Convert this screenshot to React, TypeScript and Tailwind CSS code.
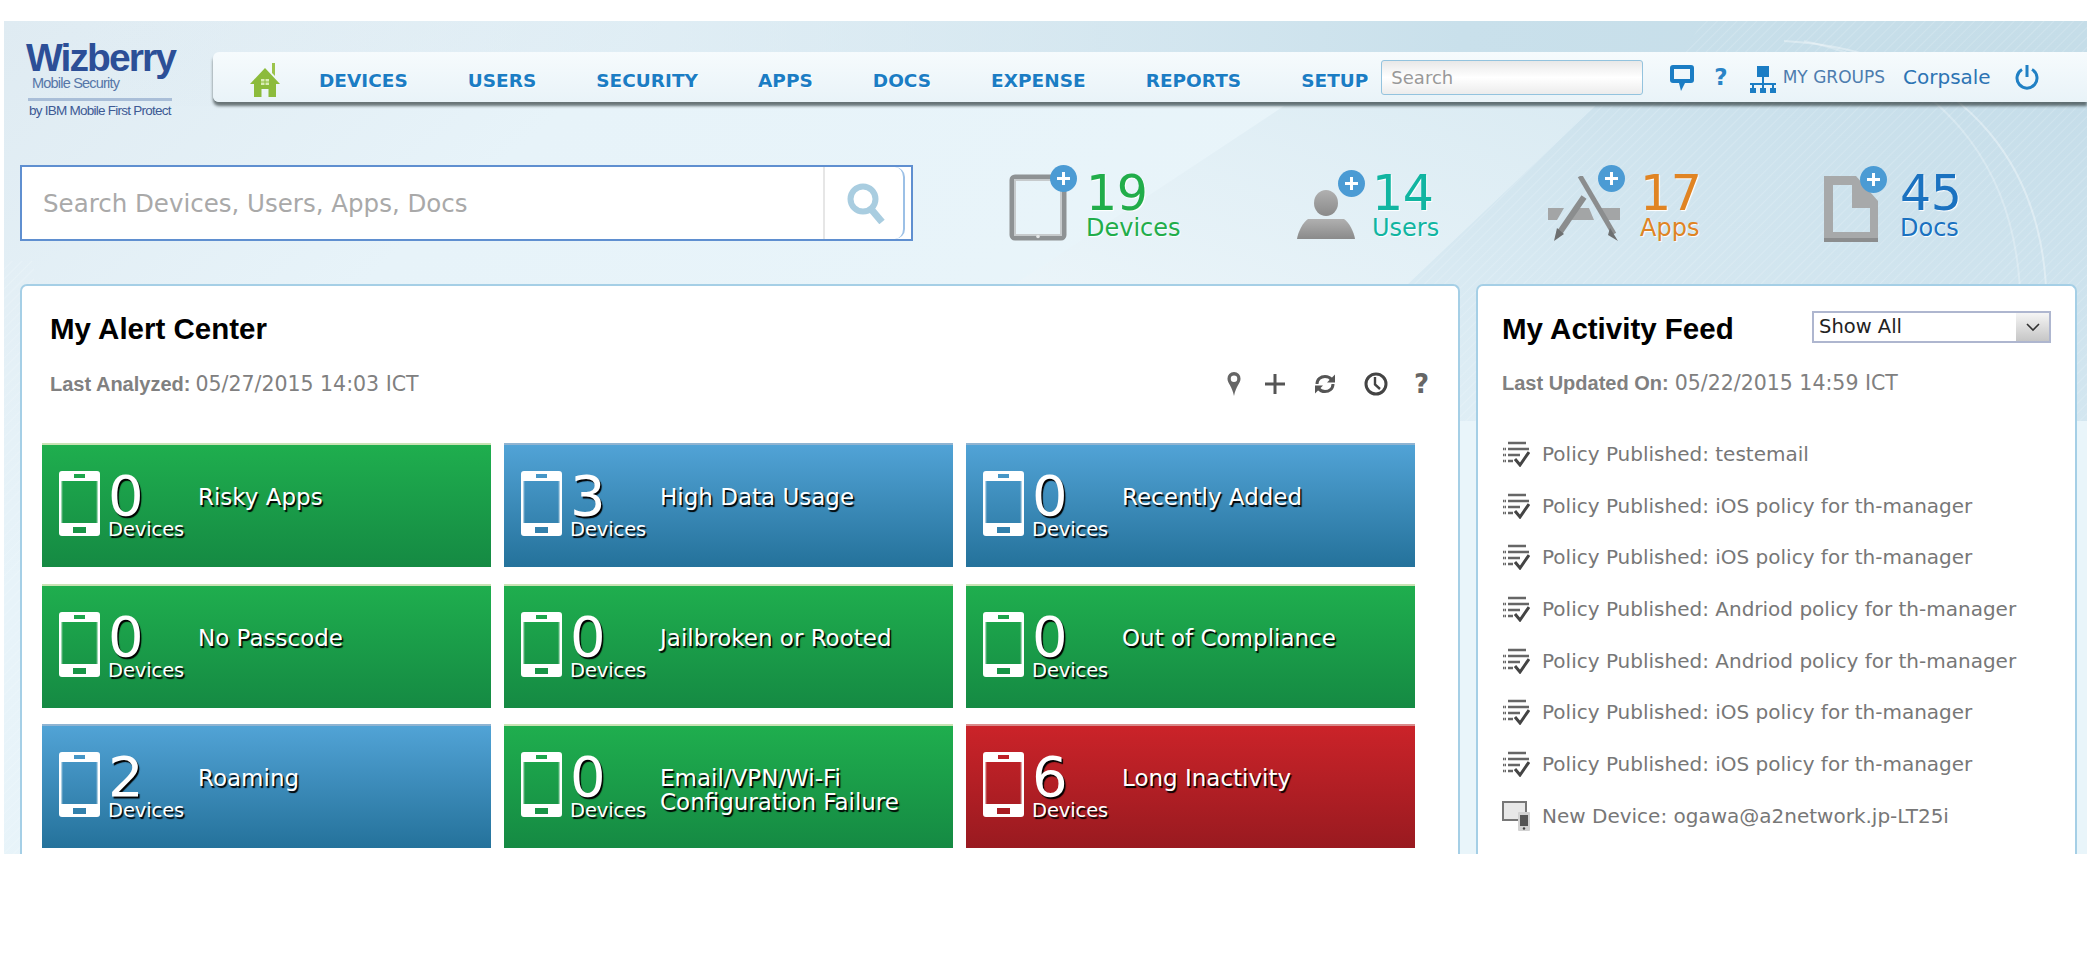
const BODY = "font-['DejaVu_Sans',sans-serif]";
const ARIAL = "font-['Liberation_Sans',Arial,sans-serif]";

type Tone = "green" | "blue" | "red";

const TONE: Record<Tone, string> = {
  green: "border-t-[#c9e3b4] bg-gradient-to-b from-[#1fae4e] to-[#158a43]",
  blue: "border-t-[#8fb4d2] bg-gradient-to-b from-[#51a3d6] to-[#24729b]",
  red: "border-t-[#d98a8a] bg-gradient-to-b from-[#cb2329] to-[#991a20]",
};

const TILES: { count: number; label: string[]; tone: Tone }[] = [
  { count: 0, label: ["Risky Apps"], tone: "green" },
  { count: 3, label: ["High Data Usage"], tone: "blue" },
  { count: 0, label: ["Recently Added"], tone: "blue" },
  { count: 0, label: ["No Passcode"], tone: "green" },
  { count: 0, label: ["Jailbroken or Rooted"], tone: "green" },
  { count: 0, label: ["Out of Compliance"], tone: "green" },
  { count: 2, label: ["Roaming"], tone: "blue" },
  { count: 0, label: ["Email/VPN/Wi-Fi", "Configuration Failure"], tone: "green" },
  { count: 6, label: ["Long Inactivity"], tone: "red" },
];

const FEED = [
  "Policy Published: testemail",
  "Policy Published: iOS policy for th-manager",
  "Policy Published: iOS policy for th-manager",
  "Policy Published: Andriod policy for th-manager",
  "Policy Published: Andriod policy for th-manager",
  "Policy Published: iOS policy for th-manager",
  "Policy Published: iOS policy for th-manager",
];

const NAV = ["DEVICES", "USERS", "SECURITY", "APPS", "DOCS", "EXPENSE", "REPORTS", "SETUP"];

function Backdrop() {
  return (
    <svg className="absolute inset-0 h-full w-full" viewBox="0 0 2083 833" preserveAspectRatio="none">
      <defs>
        <linearGradient id="base" x1="0" y1="0" x2="0.75" y2="0.35">
          <stop offset="0" stopColor="#dfebf2" />
          <stop offset="0.35" stopColor="#e7f3f9" />
          <stop offset="1" stopColor="#e9f5fa" />
        </linearGradient>
        <linearGradient id="band" x1="0" y1="1" x2="1" y2="0">
          <stop offset="0" stopColor="#f4fafd" />
          <stop offset="1" stopColor="#d9eaf2" />
        </linearGradient>
        <linearGradient id="right" x1="0" y1="1" x2="1" y2="0">
          <stop offset="0" stopColor="#e2f0f7" />
          <stop offset="1" stopColor="#c5dde9" />
        </linearGradient>
        <linearGradient id="top" x1="0" y1="0" x2="1" y2="0">
          <stop offset="0" stopColor="#e0ebf2" stopOpacity="0" />
          <stop offset="0.7" stopColor="#c9e0eb" />
          <stop offset="1" stopColor="#c5dde8" />
        </linearGradient>
        <pattern id="hatch" width="7" height="7" patternUnits="userSpaceOnUse" patternTransform="rotate(-45)">
          <line x1="0" y1="0" x2="7" y2="0" stroke="#ffffff" strokeOpacity="0.22" strokeWidth="1.5" />
        </pattern>
      </defs>
      <rect width="2083" height="833" fill="url(#base)" />
      <rect width="2083" height="85" fill="url(#top)" />
      <polygon points="1591,85 1280,85 804,400 1260,400" fill="url(#band)" opacity="0.9" />
      <polygon points="1591,85 2083,85 2083,400 1260,400" fill="url(#right)" />
      <polygon points="1591,85 2083,85 2083,400 1260,400" fill="url(#hatch)" />
      <polygon points="1700,0 2083,0 2083,85 1640,85" fill="url(#hatch)" />
      <path d="M1780 20 C1960 30 2060 150 2040 330" fill="none" stroke="#ffffff" strokeOpacity="0.35" strokeWidth="2" />
      <path d="M1800 20 C1940 50 2030 150 2015 330" fill="none" stroke="#ffffff" strokeOpacity="0.25" strokeWidth="2" />
      <rect y="240" width="30" height="593" fill="url(#hatch)" />
    </svg>
  );
}

function Logo() {
  return (
    <div className={`${ARIAL} ml-[22px] mt-[20px] w-[152px] shrink-0`}>
      <div className="h-[34px] text-[39px] leading-[34px] font-bold tracking-[-1.9px] text-[#2c4f97]">Wizberry</div>
      <div className="ml-[6px] mt-[1px] text-[14.5px] leading-[14px] tracking-[-0.8px] text-[#5676a8]">Mobile Security</div>
      <div className="ml-[2px] mt-[8px] h-[3px] w-[144px] bg-[#a9bed8]" />
      <div className="ml-[3px] mt-[2px] whitespace-nowrap text-[13.5px] leading-[15px] tracking-[-0.75px] text-[#3d5a94]">by IBM Mobile First Protect</div>
    </div>
  );
}

function HomeIcon() {
  return (
    <svg width="30" height="34" viewBox="0 0 30 34" className="mt-[5px] shrink-0">
      <path d="M15 5 L30 21 L26 21 L26 34 L18.5 34 L18.5 26 L11.5 26 L11.5 34 L4 34 L4 21 L0 21 Z" fill="#8cbb3c" />
      <path d="M22 0 L25 0 L25 13 L22 10 Z" fill="#9cc44c" />
      <rect x="11" y="16" width="8" height="6" fill="#d9ecb5" />
      <path d="M15 16 V22 M11 19 H19" stroke="#8cbb3c" strokeWidth="1" />
    </svg>
  );
}

function AddBadge({ className }: { className: string }) {
  return (
    <svg width="27" height="27" viewBox="0 0 27 27" className={`absolute ${className}`}>
      <circle cx="13.5" cy="13.5" r="13.5" fill="#4b9bd4" />
      <path d="M13.5 7 V20 M7 13.5 H20" stroke="#ffffff" strokeWidth="3" />
    </svg>
  );
}

function TabletIcon() {
  return (
    <svg width="58" height="67" viewBox="0 0 58 67" className="absolute left-0 top-[9px]">
      <rect x="3" y="3" width="52" height="61" rx="3" fill="none" stroke="#8e9294" strokeWidth="5" />
      <rect x="6" y="6" width="46" height="55" fill="none" stroke="#c6cacc" strokeWidth="2" />
      <circle cx="29" cy="62.5" r="1.8" fill="#e4e7e8" />
    </svg>
  );
}

function UserIcon() {
  return (
    <svg width="58" height="50" viewBox="0 0 58 50" className="absolute left-0 top-[25px]">
      <defs>
        <linearGradient id="userFill" x1="0" y1="0" x2="0" y2="1">
          <stop offset="0" stopColor="#b0b0b0" />
          <stop offset="1" stopColor="#8a8a8a" />
        </linearGradient>
      </defs>
      <ellipse cx="29" cy="13" rx="12" ry="13" fill="url(#userFill)" />
      <path d="M11 29 H47 C52 32 57 42 58 49 H0 C1 42 6 32 11 29 Z" fill="url(#userFill)" />
    </svg>
  );
}

function AppsIcon() {
  return (
    <svg width="72" height="66" viewBox="0 0 72 66" className="absolute left-0 top-[11px]">
      <path d="M0 32 H16 L9 44 H0 Z M27 32 H41 L46 44 H22 Z M52 32 H72 V44 H58 Z" fill="#a3a5a6" />
      <path d="M32 0 L66 58" stroke="#8b8d8e" strokeWidth="5" />
      <path d="M62 52 L70 65 L60 59 Z" fill="#6d6f70" />
      <path d="M36 21 L12 56" stroke="#8b8d8e" strokeWidth="6" />
      <path d="M9 52 L6 65 L16 58 Z" fill="#6d6f70" />
    </svg>
  );
}

function DocIcon() {
  return (
    <svg width="54" height="66" viewBox="0 0 54 66" className="absolute left-0 top-[11px]">
      <path d="M0 0 H32 L54 25 V66 H0 Z M9 9 V56 H46 V32 H28 V9 Z" fill="#a7a9aa" fillRule="evenodd" />
      <path d="M0 62 H54 V66 H0 Z" fill="#8b8d8e" />
    </svg>
  );
}

function Stat(props: { icon: React.ReactNode; badge: string; value: number; label: string; color: string; width: string; inset: string }) {
  return (
    <div className={`relative h-[76px] shrink-0 ${props.width}`}>
      {props.icon}
      <AddBadge className={props.badge} />
      <div className={`${props.inset} ${props.color} [text-shadow:1px_1px_1px_#fff]`}>
        <div className="h-[44px] text-[49px] leading-[44px] tracking-[-0.5px]">{props.value}</div>
        <div className="text-[24px] leading-[24px]">{props.label}</div>
      </div>
    </div>
  );
}

function PhoneGlyph() {
  return (
    <svg width="41" height="65" viewBox="0 0 41 65" className="shrink-0">
      <path
        fillRule="evenodd"
        fill="#ffffff"
        d="M3 0 H38 Q41 0 41 3 V62 Q41 65 38 65 H3 Q0 65 0 62 V3 Q0 0 3 0 Z M2.5 10 V52 H38.5 V10 Z M15 3 V7 H26 V3 Z M14 56 V62 H27 V56 Z"
      />
      <rect x="2.5" y="10" width="1" height="42" fill="#ffffff" fillOpacity="0.35" />
      <rect x="37.5" y="10" width="1" height="42" fill="#ffffff" fillOpacity="0.35" />
    </svg>
  );
}

function AlertTile({ count, label, tone }: { count: number; label: string[]; tone: Tone }) {
  return (
    <div className={`flex h-[124px] items-start border-t-2 pl-[17px] text-white [text-shadow:1.5px_1.5px_1px_#000] ${TONE[tone]}`}>
      <div className="mt-[26px]">
        <PhoneGlyph />
      </div>
      <div className="ml-[8px] mt-[27px] w-[90px] shrink-0">
        <div className="h-[47px] text-[56px] leading-[47px] tracking-[-1px]">{count}</div>
        <div className="text-[19.5px] leading-[22px] tracking-[-0.1px]">Devices</div>
      </div>
      <div className="mt-[40px] text-[23px] leading-[24px]">
        {label.map(l => <div key={l}>{l}</div>)}
      </div>
    </div>
  );
}

function PolicyIcon() {
  return (
    <svg width="28" height="26" viewBox="0 0 28 26" className="shrink-0">
      <path d="M6 2 H24 M6 8 H27 M6 14 H18 M6 20 H11" stroke="#666" strokeWidth="2.4" />
      <path d="M1 8 H4 M1 14 H4 M1 20 H4" stroke="#666" strokeWidth="2.4" strokeDasharray="1.5 0.5" />
      <path d="M13 18 L18 24 L27 11" fill="none" stroke="#444" strokeWidth="3" />
    </svg>
  );
}

function DeviceIcon() {
  return (
    <svg width="28" height="30" viewBox="0 0 28 30" className="shrink-0">
      <rect x="1" y="1" width="23" height="18" fill="#e8e8e8" stroke="#777" strokeWidth="2" />
      <rect x="16" y="11" width="12" height="19" rx="1" fill="#d2d2d2" />
      <rect x="18" y="14" width="8" height="11" fill="#555" />
      <circle cx="22" cy="27.5" r="1.2" fill="#444" />
    </svg>
  );
}

function ToolIcons() {
  return (
    <div className="mr-[9px] flex items-center text-[#555]">
      <svg width="14" height="24" viewBox="0 0 14 24" className="mr-[24px]">
        <path fillRule="evenodd" fill="#666" d="M7 0 A6.5 6.5 0 0 1 13.5 7 C13.5 11 9 14 7 24 C5 14 .5 11 .5 7 A6.5 6.5 0 0 1 7 0 Z M7 3.5 A3.2 3.2 0 1 0 7 10 A3.2 3.2 0 1 0 7 3.5 Z" />
      </svg>
      <svg width="20" height="20" viewBox="0 0 20 20" className="mr-[29px]">
        <path d="M10 0 V20 M0 10 H20" stroke="#555" strokeWidth="3" />
      </svg>
      <svg width="22" height="22" viewBox="0 0 22 22" className="mr-[28px]">
        <path d="M3 11 C3 6 7 3.5 11 3.5 C14 3.5 16 4.5 17.5 6.5" fill="none" stroke="#555" strokeWidth="3" />
        <path d="M21 1.5 V9.5 H13 Z" fill="#555" />
        <path d="M19 11 C19 16 15 18.5 11 18.5 C8 18.5 6 17.5 4.5 15.5" fill="none" stroke="#555" strokeWidth="3" />
        <path d="M1 20.5 V12.5 H9 Z" fill="#555" />
      </svg>
      <svg width="24" height="24" viewBox="0 0 24 24" className="mr-[26px]">
        <circle cx="12" cy="12" r="10" fill="none" stroke="#444" strokeWidth="3" />
        <path d="M11 5 V12.5 L16 17" fill="none" stroke="#444" strokeWidth="2.4" />
      </svg>
      <span className="text-[26px] leading-[26px] font-bold text-[#666]">?</span>
    </div>
  );
}

function AlertCenter() {
  return (
    <section className="h-full w-[1440px] shrink-0 overflow-hidden rounded-t-[7px] border-2 border-b-0 border-[#a5cfe6] bg-white px-[20px] pt-[25px]">
      <h2 className={`${ARIAL} ml-[8px] text-[29.5px] leading-[36px] font-bold text-black`}>My Alert Center</h2>
      <div className="ml-[8px] mt-[24px] flex items-center justify-between">
        <p className="text-[20.5px] leading-[24px] text-[#808080]">
          <b className={`${ARIAL} mr-[5px] text-[20px] font-bold`}>Last Analyzed:</b>05/27/2015 14:03 ICT
        </p>
        <ToolIcons />
      </div>
      <div className="mr-[23px] mt-[46px] grid grid-cols-3 gap-x-[13px] gap-y-[16.5px]">
        {TILES.map(t => <AlertTile key={t.label[0]} {...t} />)}
      </div>
    </section>
  );
}

function ActivityFeed() {
  return (
    <section className="ml-[16px] h-full w-[601px] shrink-0 overflow-hidden rounded-t-[7px] border-2 border-b-0 border-[#a5cfe6] bg-white pl-[24px] pr-[24px] pt-[25px]">
      <div className="flex items-start justify-between">
        <h2 className={`${ARIAL} text-[29.5px] leading-[36px] font-bold whitespace-nowrap text-black`}>My Activity Feed</h2>
        <div className="flex h-[32px] w-[239px] items-stretch border-2 border-[#aeb6cf]">
          <span className="flex-1 pl-[5px] text-[19.5px] leading-[27px] text-[#222]">Show All</span>
          <span className="flex w-[33px] items-center justify-center bg-gradient-to-b from-[#f5f5f5] to-[#c6c6c6]">
            <svg width="14" height="9" viewBox="0 0 14 9"><path d="M1 1 L7 7 L13 1" fill="none" stroke="#333" strokeWidth="1.6" /></svg>
          </span>
        </div>
      </div>
      <p className="mt-[24px] text-[20.5px] leading-[24px] text-[#808080]">
        <b className={`${ARIAL} mr-[6px] text-[20px] font-bold`}>Last Updated On:</b>05/22/2015 14:59 ICT
      </p>
      <ul className="mt-[44px] flex flex-col gap-[21.7px] text-[20px] leading-[30px] text-[#777]">
        {FEED.map((f, i) => (
          <li key={i} className="flex items-center gap-[12px] whitespace-nowrap">
            <PolicyIcon />
            {f}
          </li>
        ))}
        <li className="flex items-center gap-[12px] whitespace-nowrap">
          <DeviceIcon />
          New Device: ogawa@a2network.jp-LT25i
        </li>
      </ul>
    </section>
  );
}

export default function App() {
  return (
    <div className={`${BODY} h-[967px] bg-white px-[4px] pt-[21px]`}>
      <div className="relative h-[833px] overflow-hidden">
        <Backdrop />
        <div className="relative flex h-full flex-col">
          <header className="flex h-[144px] items-start">
            <Logo />
            <nav className="ml-[35px] mt-[31px] flex h-[50px] flex-1 items-center rounded-l-[6px] bg-gradient-to-b from-[#f6fbfd] to-[#e9f3f8] pl-[37px] shadow-[0_4px_3px_rgba(40,50,50,0.65)]">
              <HomeIcon />
              <div className="ml-[39px] mt-[7px] flex gap-[60px]">
                {NAV.map(n => (
                  <a key={n} className="text-[18.5px] leading-[24px] font-bold text-[#1b7dc4] [text-shadow:1px_1px_1px_#fff]">{n}</a>
                ))}
              </div>
              <input
                placeholder="Search"
                className="ml-[13px] h-[35px] w-[262px] rounded-[3px] border border-[#93c3de] bg-gradient-to-b from-[#e8e8e8] via-white to-[#ececec] pl-[9px] text-[18px] placeholder:text-[#999]"
              />
              <svg width="24" height="27" viewBox="0 0 24 27" className="ml-[27px] mt-[3px]">
                <path d="M3 0 H21 Q24 0 24 3 V15 Q24 18 21 18 H15 L11 26 L9 18 H3 Q0 18 0 15 V3 Q0 0 3 0 Z M4 4 V14 H20 V4 Z" fill="#1b7dc4" fillRule="evenodd" />
              </svg>
              <span className="ml-[20px] text-[23px] leading-[24px] font-bold text-[#2a84c6]">?</span>
              <svg width="26" height="28" viewBox="0 0 26 28" className="ml-[22px] mt-[5px]">
                <path d="M7 0 H19 V11 H7 Z M12 11 H14 V17 H12 Z M0 17 H26 V19 H0 Z M2 19 H4 V22 H2 Z M12 19 H14 V22 H12 Z M22 19 H24 V22 H22 Z" fill="#1b7dc4" />
                <path d="M0 22 H6 V27 H0 Z M10 22 H16 V27 H10 Z M20 22 H26 V27 H20 Z" fill="#1b7dc4" />
              </svg>
              <span className="ml-[7px] text-[17px] leading-[24px] text-[#4d7cae]">MY GROUPS</span>
              <span className="ml-[18px] text-[20px] leading-[24px] text-[#2c74b4]">Corpsale</span>
              <svg width="24" height="26" viewBox="0 0 24 26" className="ml-[24px]">
                <path d="M7 5.5 A10 10 0 1 0 17 5.5" fill="none" stroke="#2080c4" strokeWidth="3" />
                <path d="M12 1 V13" stroke="#2080c4" strokeWidth="3" />
              </svg>
            </nav>
          </header>

          <div className="flex h-[119px] items-start pl-[16px]">
            <div className="relative flex h-[76px] w-[893px] shrink-0 overflow-hidden border-2 border-[#5f8fd0] bg-white">
              <input
                placeholder="Search Devices, Users, Apps, Docs"
                className="h-full flex-1 bg-white pl-[21px] text-[24.5px] text-[#555] placeholder:text-[#a9a9a9]"
              />
              <div className="flex w-[82px] items-center justify-center rounded-r-[10px] border-x-2 border-x-[#e6e6e6] border-r-[#9cc0e6] pl-[4px]">
                <svg width="40" height="42" viewBox="0 0 40 42">
                  <circle cx="17" cy="17" r="12.5" fill="none" stroke="#a9cde0" strokeWidth="6" />
                  <path d="M25 27 L36 40" stroke="#a9cde0" strokeWidth="7" />
                </svg>
              </div>
              <div className="w-[6px]" />
            </div>
            <div className="ml-[96px] flex">
              <Stat icon={<TabletIcon />} badge="left-[41px] top-0" value={19} label="Devices" color="text-[#21ad4a]" width="w-[288px]" inset="ml-[77px] pt-[7px]" />
              <Stat icon={<UserIcon />} badge="left-[41px] top-[5px]" value={14} label="Users" color="text-[#11b5a1]" width="w-[251px]" inset="ml-[75px] pt-[7px]" />
              <Stat icon={<AppsIcon />} badge="left-[50px] top-0" value={17} label="Apps" color="text-[#e08423]" width="w-[276px]" inset="ml-[92px] pt-[7px]" />
              <Stat icon={<DocIcon />} badge="left-[36px] top-[1px]" value={45} label="Docs" color="text-[#1b72c0]" width="w-[80px]" inset="ml-[76px] pt-[7px]" />
            </div>
          </div>

          <main className="flex min-h-0 flex-1 pl-[16px]">
            <AlertCenter />
            <ActivityFeed />
          </main>
        </div>
      </div>
    </div>
  );
}
